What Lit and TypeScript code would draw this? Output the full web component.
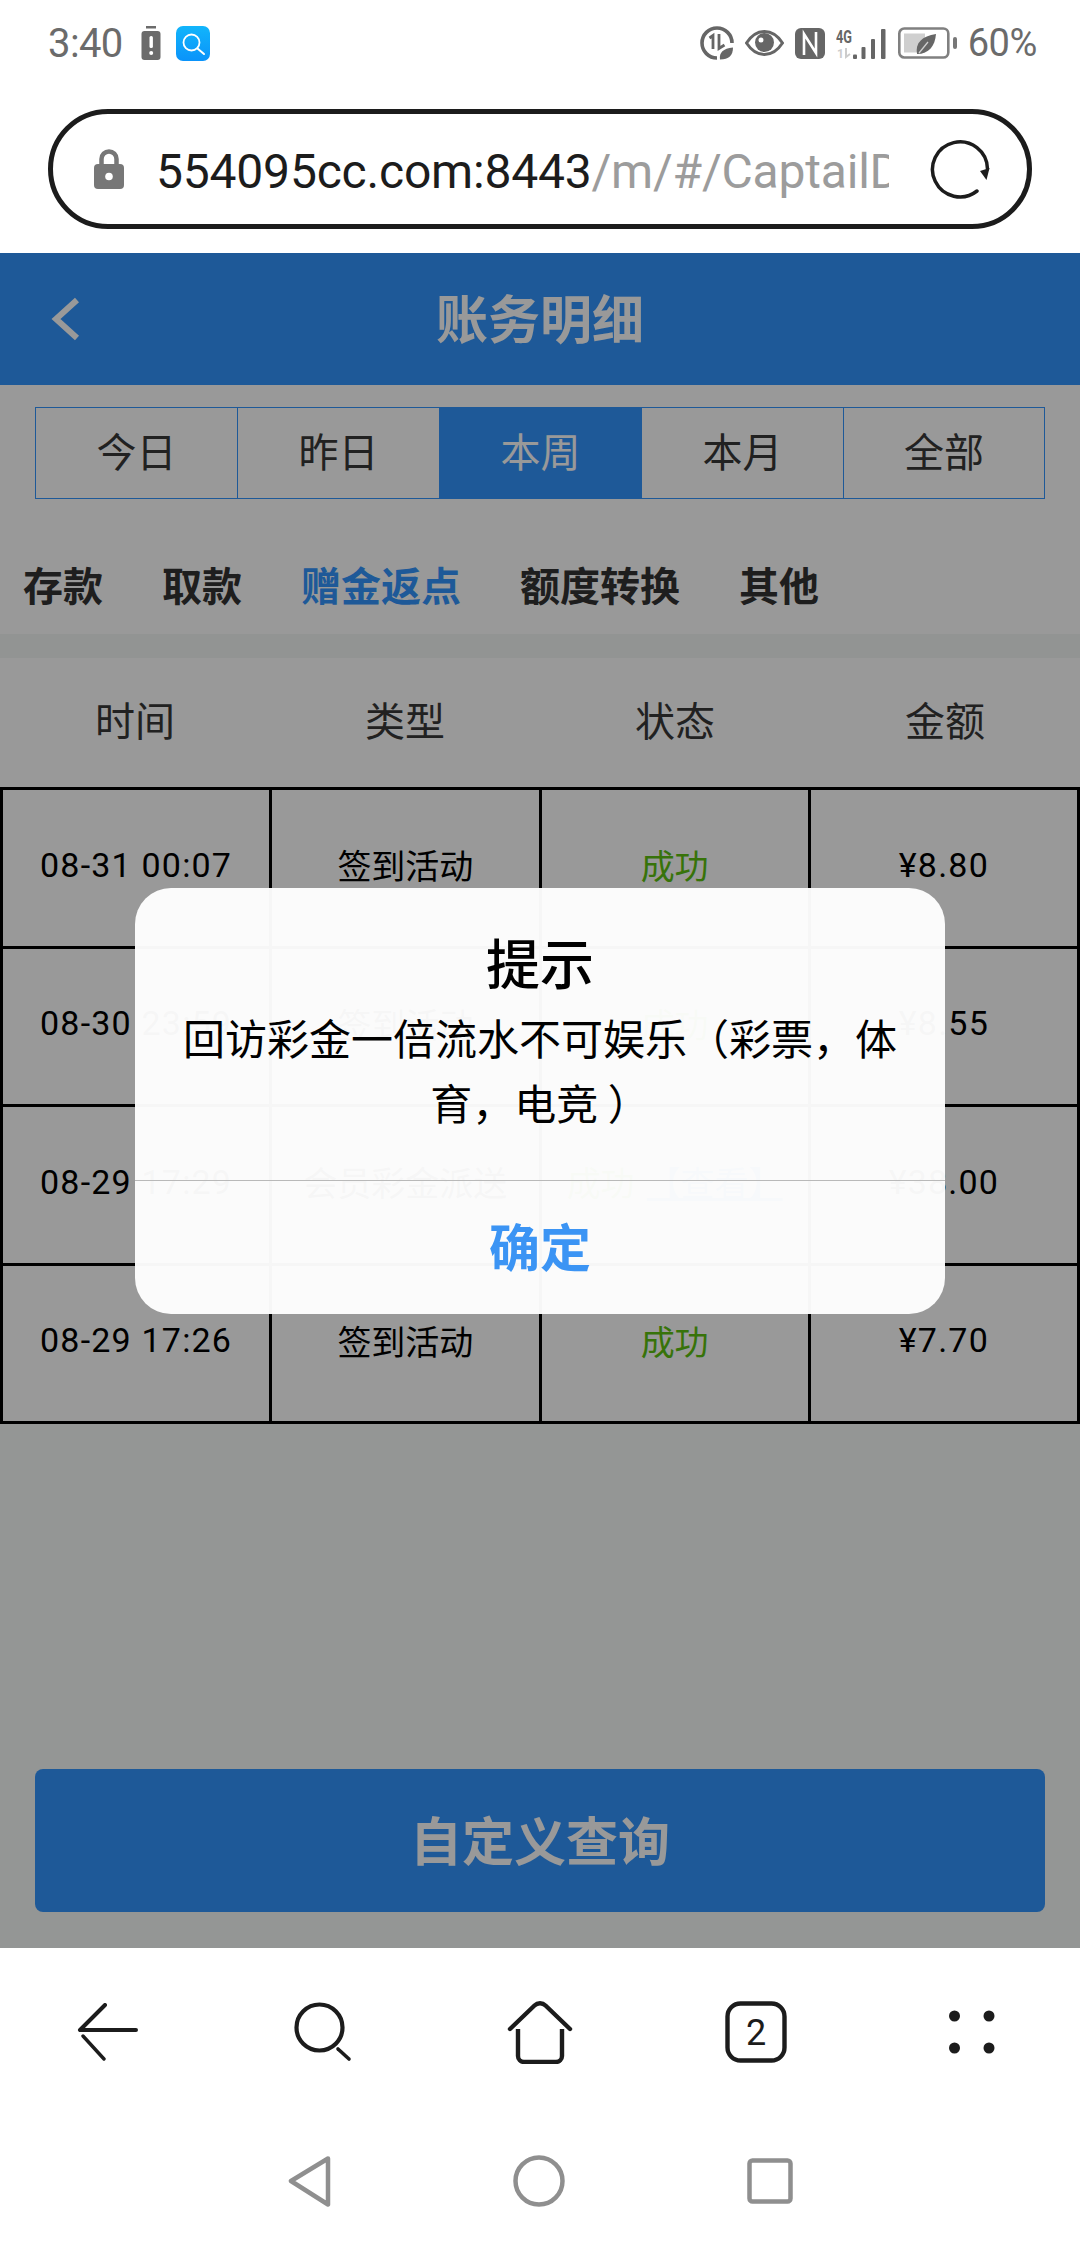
import { LitElement, html, css, svg } from "lit";
import { customElement } from "lit/decorators.js";

const rows = [
  ["08-31 00:07", "签到活动", "成功", "", "¥8.80"],
  ["08-30 23:59", "签到活动", "成功", "", "¥8.55"],
  ["08-29 17:29", "会员彩金派送", "成功", "【查看】", "¥38.00"],
  ["08-29 17:26", "签到活动", "成功", "", "¥7.70"],
];

@customElement("app-root")
export class AppRoot extends LitElement {
  static styles = css`
    :host { display: block; width: 1080px; height: 2244px; position: relative; overflow: hidden; background: #fff;
      font-family: "Noto Sans CJK SC", "Noto Sans", sans-serif; color: #333; }
    svg { display: block; flex: none; }
    .shell { height: 2244px; display: flex; flex-direction: column; }

    .status { height: 86px; padding: 0 43px 0 48px; display: flex; align-items: center; color: #6b6b6b; font-family: Roboto, sans-serif; font-size: 38px; box-sizing: border-box; }
    .status .time { width: 76px; margin-right: 17px; font-size: 40px; letter-spacing: -0.6px; }
    .status .bat-alert { margin-right: 15px; }
    .status .spacer { flex: 1; }
    .status .ic { margin-right: 11px; }
    .status .gap12 { margin-right: 12px; }
    .status .pct { letter-spacing: -0.4px; }

    .urlwrap { height: 167px; box-sizing: border-box; padding: 23px 48px 0; }
    .url { height: 120px; box-sizing: border-box; border: 5px solid #1c1c1c; border-radius: 60px; display: flex; align-items: center; padding: 0 37px 0 41px; }
    .url .lock { margin-right: 32px; }
    .url .addr { width: 733px; overflow: hidden; white-space: nowrap; font-family: Roboto, sans-serif; font-size: 48px; line-height: 60px; padding-top: 5px; color: #1c1c1c; letter-spacing: -0.2px; }
    .url .addr span { color: #9c9c9c; }
    .url .reload { margin-left: auto; }

    .page { flex: 1; position: relative; display: flex; flex-direction: column; background: #f7faf8; }
    .hdr { height: 132px; background: #3395fe; flex: none; box-sizing: border-box; padding-bottom: 5px; display: flex; align-items: center; justify-content: center; position: relative; color: #fff; font-size: 52px; font-weight: 700; }
    .hdr svg { position: absolute; left: 50px; top: 44px; }

    .top { background: #fff; flex: none; }
    .periods { margin: 22px 35px 0; display: grid; grid-template-columns: repeat(4, 202px) 1fr; height: 92px; border: 1px solid #3395fe; box-sizing: border-box; }
    .periods div { display: flex; align-items: center; justify-content: center; box-sizing: border-box; padding-bottom: 6px; font-size: 40px; color: #383838; border-right: 1px solid #3395fe; }
    .periods div:last-child { border-right: 0; }
    .periods .on { background: #3395fe; color: #fff; }

    .cats { height: 135px; box-sizing: border-box; padding: 35px 0 0 23px; display: flex; align-items: center; gap: 59px; font-size: 40px; font-weight: 700; color: #333; }
    .cats .on { color: #3395fe; }
    .band { height: 24px; background: #f4f7f5; }

    .thead { height: 129px; box-sizing: border-box; padding-bottom: 8px; display: grid; grid-template-columns: repeat(4, 1fr); align-items: center; text-align: center; font-size: 40px; color: #383838; background: #fff; }

    .tbl { display: grid; grid-template-columns: repeat(4, 1fr); width: 1080px; box-sizing: border-box; background: #fff; border-top: 3px solid #000; border-right: 3px solid #000; flex: none; }
    .cell { height: 158.5px; box-sizing: border-box; padding-bottom: 6px; border-bottom: 3px solid #000; border-left: 3px solid #000; display: flex; align-items: center; justify-content: center; font-size: 34px; color: #000; }
    .cell .num { font-family: Roboto, sans-serif; letter-spacing: 1.2px; }
    .ok { color: #5cc010; }
    .link { color: #3395fe; text-decoration: underline; margin-left: 12px; }

    .query { margin: auto 35px 36px; height: 143px; box-sizing: border-box; padding-bottom: 5px; border-radius: 8px; background: #3395fe; color: #fff; display: flex; align-items: center; justify-content: center; font-size: 52px; font-weight: 700; }

    .tools { height: 296px; flex: none; background: #fff; display: flex; flex-direction: column; }
    .tb { height: 168px; flex: none; display: grid; grid-template-columns: repeat(5, 1fr); justify-items: center; align-items: center; }
    .sys { margin-top: 39px; display: flex; justify-content: center; align-items: center; gap: 182px; }

    .veil { position: absolute; left: 0; right: 0; top: 253px; height: 1695px; background: rgba(0,0,0,.4); }
    .dlg { position: absolute; left: 135px; top: 888px; width: 810px; height: 426px; border-radius: 36px; background: rgba(255,255,255,.965); display: flex; flex-direction: column; color: #000; text-align: center; }
    .dlg .body { height: 293px; box-sizing: border-box; border-bottom: 1px solid #b9b9b9; padding: 36px 40px 0; }
    .dlg h2 { margin: 0; font-size: 54px; line-height: 76px; font-weight: 500; }
    .dlg p { margin: 4px 0 0; font-size: 42px; line-height: 65px; font-weight: 400; }
    .dlg .ok-btn { flex: 1; box-sizing: border-box; padding-bottom: 6px; display: flex; align-items: center; justify-content: center; font-size: 51px; font-weight: 700; color: #3b94f4; }
  `;

  private ico(w: number, h: number, body: unknown, cls = "") {
    return html`<svg class=${cls} width=${w} height=${h} viewBox="0 0 ${w} ${h}">${body}</svg>`;
  }

  render() {
    return html`
      <div class="shell">
        <div class="status">
          <span class="time">3:40</span>
          ${this.ico(20, 34, svg`<rect x="5" y="0" width="10" height="2.500" fill="#6b6b6b"/><rect x="0.500" y="5" width="19" height="29" rx="3" fill="#6b6b6b"/><rect x="8.500" y="10" width="3.400" height="12" rx="1.500" fill="#fff"/><circle cx="10.200" cy="27" r="2" fill="#fff"/>`, "bat-alert")}
          ${this.ico(34, 35, svg`<defs><linearGradient id="qg" x1="0" y1="0" x2="0" y2="1"><stop offset="0" stop-color="#12b5fb"/><stop offset="1" stop-color="#0a93fa"/></linearGradient></defs><rect width="34" height="35" rx="7" fill="url(#qg)"/><circle cx="15.500" cy="16.500" r="8" fill="none" stroke="#fff" stroke-width="1.800"/><path d="M21.500 22.500L28 28" stroke="#fff" stroke-width="2" stroke-linecap="round"/>`)}
          <span class="spacer"></span>
          ${this.ico(34, 34, svg`<path d="M17 32A15 15 0 1 1 32 17" fill="none" stroke="#666" stroke-width="3.600"/><path d="M9.500 12l3.500-2.500V23" fill="none" stroke="#666" stroke-width="2.800"/><path d="M19 8v14.500l5.500-3.500" fill="none" stroke="#666" stroke-width="2.800"/><path d="M20 33.500c-1-7 3-11 13-12 0 8-4 12-13 12z" fill="#666"/>`, "ic")}
          ${this.ico(39, 26, svg`<path d="M1.500 13C7 4.500 13 1.500 19.500 1.500S32 4.500 37.500 13C32 21.500 26 24.500 19.500 24.500S7 21.500 1.500 13z" fill="none" stroke="#666" stroke-width="3"/><circle cx="19.500" cy="12.500" r="9.500" fill="#666"/><circle cx="16" cy="10" r="2.500" fill="#fff"/>`, "ic")}
          ${this.ico(30, 31, svg`<rect x="0" y="0" width="30" height="31" rx="6" fill="#666"/><path d="M9 27V6L21 25V4" fill="none" stroke="#fff" stroke-width="2.600"/>`, "ic")}
          ${this.ico(50, 31, svg`<text x="0" y="15" font-family="Roboto" font-size="19" font-weight="700" fill="#666" textLength="16" lengthAdjust="spacingAndGlyphs">4G</text><text x="1" y="30" font-family="Roboto" font-size="12" font-weight="700" fill="#ccc">1</text><path d="M10 20v9l4-3" fill="none" stroke="#ccc" stroke-width="2"/><rect x="17" y="26.500" width="4" height="4.500" rx="1" fill="#666"/><rect x="25.500" y="19" width="4" height="12" rx="1" fill="#666"/><rect x="35" y="11" width="4" height="20" rx="1" fill="#666"/><rect x="45" y="1" width="4.500" height="30" rx="1" fill="#666"/>`, "ic gap12")}
          ${this.ico(59, 32, svg`<rect x="1.300" y="1.500" width="49" height="29" rx="5" fill="none" stroke="#808080" stroke-width="2.600"/><rect x="6" y="6.500" width="21" height="19" fill="#cfcfcf"/><rect x="55" y="10" width="4" height="12" rx="2" fill="#777"/><path d="M19 27c-2-11 5-18 19-20-1 12-7 20-19 20z" fill="#666"/><path d="M21 26l9-11" stroke="#cfcfcf" stroke-width="1.300"/>`, "ic")}
          <span class="pct">60%</span>
        </div>
        <div class="urlwrap">
          <div class="url">
            ${this.ico(30, 40, svg`<path d="M7.500 18v-8a7.500 7.500 0 0 1 15 0v8" fill="none" stroke="#777" stroke-width="4.500"/><rect x="0" y="15" width="30" height="25" rx="4" fill="#777"/><circle cx="15" cy="27.500" r="3.800" fill="#fff"/>`, "lock")}
            <div class="addr">554095cc.com:8443<span>/m/#/CaptailD</span></div>
            ${this.ico(60, 60, svg`<path d="M47 52A27.500 27.500 0 1 1 57.500 30" fill="none" stroke="#1c1c1c" stroke-width="3.500" stroke-linecap="round"/><path d="M50 32l9.500-3-3 12z" fill="#1c1c1c"/>`, "reload")}
          </div>
        </div>

        <div class="page">
          <div class="hdr">
            ${this.ico(30, 44, svg`<path d="M27 3L6 22l21 19" fill="none" stroke="#fff" stroke-width="6"/>`)}
            账务明细
          </div>
          <div class="top">
            <div class="periods">
              <div>今日</div><div>昨日</div><div class="on">本周</div><div>本月</div><div>全部</div>
            </div>
            <div class="cats"><span>存款</span><span>取款</span><span class="on">赠金返点</span><span>额度转换</span><span>其他</span></div>
          </div>
          <div class="band"></div>
          <div class="thead"><span>时间</span><span>类型</span><span>状态</span><span>金额</span></div>
          <div class="tbl">
            ${rows.map((r) => html`
              <div class="cell"><span class="num">${r[0]}</span></div>
              <div class="cell">${r[1]}</div>
              <div class="cell"><span class="ok">${r[2]}</span>${r[3] ? html`<span class="link">${r[3]}</span>` : ""}</div>
              <div class="cell"><span class="num">${r[4]}</span></div>
            `)}
          </div>
          <div class="query">自定义查询</div>
        </div>

        <div class="tools">
          <div class="tb">
            ${this.ico(62, 58, svg`<path d="M28 2L3 27h56" fill="none" stroke="#1c1c1c" stroke-width="4" stroke-linecap="round" stroke-linejoin="round"/><path d="M6 33l21 23" fill="none" stroke="#1c1c1c" stroke-width="3.400" stroke-linecap="round"/>`)}
            ${this.ico(60, 60, svg`<circle cx="25.500" cy="25.500" r="23" fill="none" stroke="#1c1c1c" stroke-width="4.200"/><path d="M44 47l11 10" fill="none" stroke="#1c1c1c" stroke-width="3.600" stroke-linecap="round"/>`)}
            ${this.ico(66, 64, svg`<path d="M3 29L27.500 5.500a8 8 0 0 1 11 0L63 29" fill="none" stroke="#1c1c1c" stroke-width="4.400" stroke-linecap="round" stroke-linejoin="round"/><path d="M11 29v27a6 6 0 0 0 6 6h32a6 6 0 0 0 6-6V29" fill="none" stroke="#1c1c1c" stroke-width="4.400"/>`)}
            ${this.ico(62, 62, svg`<rect x="2.500" y="2.500" width="57" height="57" rx="13" fill="none" stroke="#1c1c1c" stroke-width="4.400"/><text x="31" y="44" text-anchor="middle" font-family="Roboto" font-size="36" fill="#1c1c1c">2</text>`)}
            ${this.ico(46, 44, svg`<circle cx="5.500" cy="6" r="5.500" fill="#1c1c1c"/><circle cx="40" cy="6" r="5.500" fill="#1c1c1c"/><circle cx="5.500" cy="38" r="5.500" fill="#1c1c1c"/><circle cx="40" cy="38" r="5.500" fill="#1c1c1c"/>`)}
          </div>
          <div class="sys">
            ${this.ico(44, 52, svg`<path d="M41 3.500L4 26l37 23.500z" fill="none" stroke="#8f8f8f" stroke-width="4.500" stroke-linejoin="round"/>`)}
            ${this.ico(52, 52, svg`<circle cx="26" cy="26" r="23.500" fill="none" stroke="#8f8f8f" stroke-width="4.500"/>`)}
            ${this.ico(46, 46, svg`<rect x="2.500" y="2.500" width="41" height="41" rx="3" fill="none" stroke="#8f8f8f" stroke-width="4.500"/>`)}
          </div>
        </div>
      </div>
      <div class="veil"></div>
      <div class="dlg">
        <div class="body">
          <h2>提示</h2>
          <p>回访彩金一倍流水不可娱乐（彩票，体育，电竞 ）</p>
        </div>
        <div class="ok-btn">确定</div>
      </div>
    `;
  }
}
